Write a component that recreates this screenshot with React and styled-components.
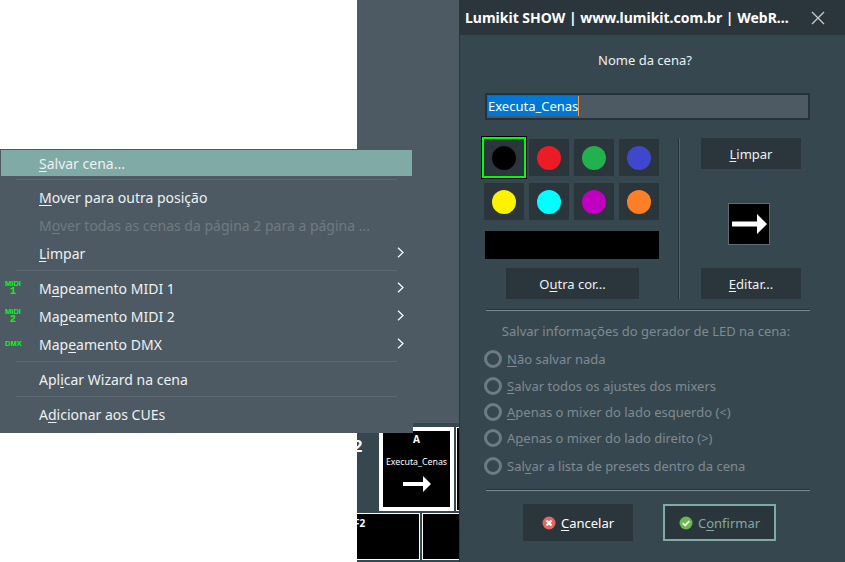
import React from 'react';
import styled, { createGlobalStyle } from 'styled-components';

const Global = createGlobalStyle`
  html, body { margin: 0; padding: 0; background: #fff; }
  body { font-family: "Noto Sans", "Open Sans", sans-serif; font-size: 14px; }
  u { text-underline-offset: 2px; text-decoration-thickness: 1px; }
`;

const menuRows = [
  { label: <><u>S</u>alvar cena...</>, active: true },
  { sep: true },
  { label: <><u>M</u>over para outra posição</> },
  { label: <>M<u>o</u>ver todas as cenas da página 2 para a página ...</>, disabled: true },
  { label: <><u>L</u>impar</>, sub: true },
  { sep: true },
  { label: <>M<u>a</u>peamento MIDI 1</>, sub: true, badge: ['MIDI', '1'] },
  { label: <>Ma<u>p</u>eamento MIDI 2</>, sub: true, badge: ['MIDI', '2'] },
  { label: <>Map<u>e</u>amento DMX</>, sub: true, badge: ['DMX'] },
  { sep: true },
  { label: <>Apl<u>i</u>car Wizard na cena</> },
  { sep: true },
  { label: <>A<u>d</u>icionar aos CUEs</> },
];

const swatches = ['#000000', '#ed1c24', '#22b14c', '#3f48cc', '#fff200', '#00ffff', '#c000c0', '#ff7f27'];

const radios = [
  { label: <><u>N</u>ão salvar nada</>, gap: 0 },
  { label: <><u>S</u>alvar todos os ajustes dos mixers</>, gap: 1 },
  { label: <><u>A</u>penas o mixer do lado esquerdo (&lt;)</>, gap: 0 },
  { label: <>A<u>p</u>enas o mixer do lado direito (&gt;)</>, gap: 0 },
  { label: <>Sal<u>v</u>ar a lista de presets dentro da cena</>, gap: 2 },
];

function ArrowGlyph({ width }) {
  return (
    <svg width={width} height={(width * 20) / 35} viewBox="0 0 35 20">
      <path d="M0 7.5h25V0l10 10-10 10v-7.5H0z" fill="#fff" />
    </svg>
  );
}

function Chevron() {
  return (
    <ChevronBox width="7" height="11" viewBox="0 0 7 11">
      <path d="M1 .8 6 5.5 1 10.2" fill="none" stroke="#fff" strokeWidth="1.2" />
    </ChevronBox>
  );
}

function Menu() {
  return (
    <MenuPanel>
      {menuRows.map((row, i) =>
        row.sep ? (
          <MenuSep key={i} />
        ) : (
          <MenuItem key={i} $active={row.active} $disabled={row.disabled}>
            <Badge>
              {row.badge && <BadgeTop>{row.badge[0]}</BadgeTop>}
              {row.badge && row.badge[1] && <BadgeNum>{row.badge[1]}</BadgeNum>}
            </Badge>
            <MenuLabel>{row.label}</MenuLabel>
            {row.sub && <Chevron />}
          </MenuItem>
        )
      )}
    </MenuPanel>
  );
}

function Dialog() {
  return (
    <DialogPanel>
      <TitleBar>
        <Title>Lumikit SHOW | www.lumikit.com.br | WebR...</Title>
        <svg width="14" height="14" viewBox="0 0 14 14">
          <path d="M1 1 13 13M13 1 1 13" stroke="#c3c8cb" strokeWidth="1.4" fill="none" />
        </svg>
      </TitleBar>
      <Body>
        <Prompt>Nome da cena?</Prompt>
        <NameInput>
          <Selected>Executa_Cenas</Selected>
          <Caret />
        </NameInput>
        <ColorRow>
          <ColorCol>
            <SwatchGrid>
              {swatches.map((c, i) => (
                <Swatch key={c} $selected={i === 0}>
                  <Dot $color={c} />
                </Swatch>
              ))}
            </SwatchGrid>
            <ColorBar />
            <OtherColorButton $width={133}>O<u>u</u>tra cor...</OtherColorButton>
          </ColorCol>
          <VDivider />
          <SideCol>
            <FlatButton $width={100}><u>L</u>impar</FlatButton>
            <ArrowBox><ArrowGlyph width={35} /></ArrowBox>
            <FlatButton $width={100}><u>E</u>ditar...</FlatButton>
          </SideCol>
        </ColorRow>
        <HDivider $top={10} />
        <LedCaption>Salvar informações do gerador de LED na cena:</LedCaption>
        <RadioList>
          {radios.map((r, i) => (
            <RadioRow key={i} $shift={r.gap}>
              <RadioMark />
              <span>{r.label}</span>
            </RadioRow>
          ))}
        </RadioList>
        <HDivider $top={10} />
        <Actions>
          <ActionButton $width={110}>
            <svg width="14" height="14" viewBox="0 0 14 14">
              <circle cx="7" cy="7" r="6.5" fill="#e2675f" />
              <path d="M4.5 4.5l5 5M9.5 4.5l-5 5" stroke="#fff" strokeWidth="2.2" />
            </svg>
            <span><u>C</u>ancelar</span>
          </ActionButton>
          <ActionButton $width={113} $primary>
            <svg width="14" height="14" viewBox="0 0 14 14">
              <circle cx="7" cy="7" r="6.5" fill="#66b84f" />
              <path d="M3.8 7.2l2.3 2.3 4.2-4.4" stroke="#fff" strokeWidth="1.9" fill="none" />
            </svg>
            <span>C<u>o</u>nfirmar</span>
          </ActionButton>
        </Actions>
      </Body>
    </DialogPanel>
  );
}

export default function App() {
  return (
    <Stage>
      <Global />
      <Blank />
      <Backdrop>
        <BackdropTop />
        <TileRow>
          <PageNumber>2</PageNumber>
          <SceneTile>
            <TileKey>A</TileKey>
            <TileName>Executa_Cenas</TileName>
            <ArrowGlyph width={28} />
          </SceneTile>
          <EmptyTile $width={12} />
        </TileRow>
        <TileRow $second>
          <EmptyTile $width={70} $bleed={7}><SmallKey>F2</SmallKey></EmptyTile>
          <EmptyTile $width={50} />
        </TileRow>
      </Backdrop>
      <Dialog />
      <Menu />
    </Stage>
  );
}

const Stage = styled.div`
  position: relative;
  display: flex;
  width: 845px;
  height: 562px;
  overflow: hidden;
  color: #eef1f2;
`;
const Blank = styled.div`
  width: 357px;
  background: #fff;
`;
const Backdrop = styled.div`
  width: 102px;
  display: flex;
  flex-direction: column;
  background: #37474f;
  overflow: hidden;
`;
const BackdropTop = styled.div`
  height: 423px;
  flex: none;
  background: #4d5a63;
  border-bottom: 4px solid #37474f;
`;
const TileRow = styled.div`
  display: flex;
  align-items: stretch;
  gap: 2px;
  height: ${(p) => (p.$second ? '47px' : '84px')};
  margin-top: ${(p) => (p.$second ? '2px' : '0')};
  flex: none;
`;
const PageNumber = styled.div`
  width: 24px;
  flex: none;
  margin-left: -4px;
  padding-top: 10px;
  font: bold 17px "Liberation Sans", sans-serif;
  color: #fff;
`;
const SceneTile = styled.div`
  width: 75px;
  flex: none;
  box-sizing: border-box;
  border: 4px solid #fff;
  background: #000;
  display: flex;
  flex-direction: column;
  align-items: center;
  color: #fff;
`;
const TileKey = styled.div`
  font-size: 10px;
  font-weight: 700;
  line-height: 12px;
  margin-top: 2px;
`;
const TileName = styled.div`
  font-size: 8.8px;
  line-height: 12px;
  margin-top: 11px;
  margin-bottom: 8px;
  white-space: nowrap;
`;
const EmptyTile = styled.div`
  width: ${(p) => p.$width}px;
  margin-left: ${(p) => (p.$bleed ? -p.$bleed : 0)}px;
  flex: none;
  box-sizing: border-box;
  border: 1px solid #fff;
  background: #000;
  color: #fff;
`;
const SmallKey = styled.div`
  font-size: 10px;
  font-weight: 700;
  line-height: 12px;
  margin: 3px 0 0 3px;
`;

const MenuPanel = styled.div`
  position: absolute;
  left: 0;
  top: 149px;
  width: 413px;
  height: 284px;
  box-sizing: border-box;
  padding: 1px 1px 0;
  background: #4d5a63;
`;
const MenuItem = styled.div`
  display: flex;
  align-items: center;
  height: ${(p) => (p.$active ? '26px' : '28px')};
  color: ${(p) => (p.$disabled ? '#6f7a81' : '#eef1f2')};
  background: ${(p) => (p.$active ? '#7faaa5' : 'transparent')};
  font-size: 14px;
  white-space: nowrap;
`;
const Badge = styled.div`
  width: 38px;
  flex: none;
  box-sizing: border-box;
  padding-left: 4px;
  color: #00ff00;
  display: flex;
  flex-direction: column;
  align-items: flex-start;
`;
const BadgeTop = styled.span`
  width: 16px;
  text-align: center;
  font: bold 7.5px/8px "Liberation Sans", sans-serif;
`;
const BadgeNum = styled.span`
  width: 16px;
  text-align: center;
  font: bold 10px/8px "Liberation Mono", monospace;
`;
const MenuLabel = styled.span`
  flex: 1;
`;
const ChevronBox = styled.svg`
  margin-right: 8px;
  margin-top: -2px;
`;
const MenuSep = styled.div`
  height: 1px;
  background: #5d6a72;
  margin: 3px 15px;
`;

const DialogPanel = styled.div`
  width: 386px;
  display: flex;
  flex-direction: column;
  background: #37474f;
  box-sizing: border-box;
  border-left: 1px solid #2b363c;
  font-size: 13px;
`;
const TitleBar = styled.div`
  height: 35px;
  flex: none;
  display: flex;
  align-items: center;
  justify-content: space-between;
  background: #2b363c;
  padding: 0 20px 0 5px;
`;
const Title = styled.div`
  font-weight: 700;
  font-size: 14px;
  color: #fff;
  white-space: nowrap;
`;
const Body = styled.div`
  display: flex;
  flex-direction: column;
  padding: 0 35px 0 24px;
`;
const Prompt = styled.div`
  margin-top: 15px;
  height: 20px;
  line-height: 20px;
  padding-right: 4px;
  text-align: center;
`;
const NameInput = styled.div`
  margin: 23px 0 0 1px;
  box-sizing: border-box;
  height: 27px;
  padding: 1px;
  display: flex;
  border: 2px solid #263238;
  background: #4d5a63;
`;
const Selected = styled.span`
  background: #0078d7;
  color: #fff;
  line-height: 20px;
  height: 20px;
`;
const Caret = styled.span`
  width: 1px;
  height: 20px;
  background: #ff9a3c;
`;
const ColorRow = styled.div`
  display: flex;
  margin-top: 18px;
  height: 161px;
`;
const ColorCol = styled.div`
  width: 175px;
  padding-top: 1px;
  display: flex;
  flex-direction: column;
  align-items: center;
`;
const SwatchGrid = styled.div`
  display: grid;
  grid-template-columns: repeat(4, 40px);
  grid-auto-rows: 37px;
  gap: 7px 5px;
`;
const Swatch = styled.div`
  position: relative;
  display: flex;
  align-items: center;
  justify-content: center;
  background: #2b363c;
  ${(p) => p.$selected && `
    &::after {
      content: '';
      position: absolute;
      inset: -2px;
      border: 2px solid #00ff00;
      box-shadow: 0 0 0 1px #000;
    }
  `}
`;
const Dot = styled.div`
  width: 24px;
  height: 24px;
  border-radius: 50%;
  background: ${(p) => p.$color};
`;
const ColorBar = styled.div`
  width: 174px;
  height: 28px;
  margin: 11px 0 9px;
  background: #000;
`;
const FlatButton = styled.div`
  width: ${(p) => p.$width}px;
  height: 31px;
  flex: none;
  display: flex;
  align-items: center;
  justify-content: center;
  background: #2b363c;
  white-space: pre;
`;
const OtherColorButton = styled(FlatButton)`
  margin-left: 2px;
`;
const VDivider = styled.div`
  width: 1px;
  margin-left: 19px;
  background: #263238;
  border-right: 1px solid #55626a;
`;
const SideCol = styled.div`
  margin-left: 21px;
  width: 100px;
  display: flex;
  flex-direction: column;
  align-items: flex-start;
`;
const ArrowBox = styled.div`
  width: 42px;
  height: 42px;
  margin: 34px 0 23px 27px;
  box-sizing: border-box;
  display: flex;
  align-items: center;
  justify-content: center;
  background: #000;
  border: 1px solid #5d6a72;
`;
const HDivider = styled.div`
  height: 1px;
  margin: ${(p) => p.$top}px 0 0 2px;
  background: #7d8a90;
  border-top: 1px solid #263238;
`;
const LedCaption = styled.div`
  margin-top: 11px;
  height: 18px;
  line-height: 18px;
  padding-right: 2px;
  text-align: center;
  color: #7f8b91;
`;
const RadioList = styled.div`
  display: flex;
  flex-direction: column;
  margin-top: 6px;
  color: #7f8b91;
`;
const RadioRow = styled.div`
  display: flex;
  align-items: center;
  gap: 5px;
  height: 26px;
  margin-top: ${(p) => p.$shift}px;
`;
const RadioMark = styled.div`
  width: 18px;
  height: 18px;
  box-sizing: border-box;
  border-radius: 50%;
  border: 3px solid #6e7b82;
  flex: none;
`;
const Actions = styled.div`
  display: flex;
  gap: 30px;
  margin: 13px 0 0 39px;
`;
const ActionButton = styled.div`
  width: ${(p) => p.$width}px;
  height: 37px;
  box-sizing: border-box;
  display: flex;
  align-items: center;
  justify-content: center;
  gap: 5px;
  background: #2b363c;
  color: ${(p) => (p.$primary ? '#7faaa5' : '#fff')};
  border: ${(p) => (p.$primary ? '2px solid #7faaa5' : 'none')};
`;
